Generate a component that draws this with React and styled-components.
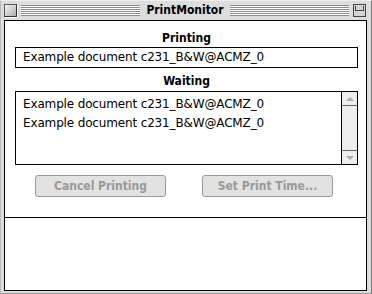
import React from 'react'
import styled, { createGlobalStyle } from 'styled-components'

const Global = createGlobalStyle`
  html, body { margin: 0; padding: 0; background: #fff; }
  * { box-sizing: border-box; }
`

function App() {
    const waiting = [
        'Example document c231_B&W@ACMZ_0',
        'Example document c231_B&W@ACMZ_0',
    ]
    return (
        <>
            <Global />
            <Window>
                <TitleBar>
                    <CloseBox />
                    <Stripes />
                    <Title>PrintMonitor</Title>
                    <Stripes />
                    <ZoomBox>
                        <span />
                    </ZoomBox>
                </TitleBar>
                <Content>
                    <Main>
                        <Label>Printing</Label>
                        <Field>Example document c231_B&amp;W@ACMZ_0</Field>
                        <Label $top={5}>Waiting</Label>
                        <List>
                            <Items>
                                {waiting.map((w, i) => (
                                    <Item key={i}>{w}</Item>
                                ))}
                            </Items>
                            <ScrollBar>
                                <Arrow $up />
                                <Track />
                                <Arrow />
                            </ScrollBar>
                        </List>
                        <Buttons>
                            <Button disabled>Cancel Printing</Button>
                            <Button disabled>Set Print Time...</Button>
                        </Buttons>
                    </Main>
                    <Footer />
                </Content>
            </Window>
        </>
    )
}

const Window = styled.div`
    width: 372px;
    height: 294px;
    background: #dddddd;
    border-top: 1px solid #eeeeee;
    border-left: 1px solid #bbbbbb;
    border-right: 1px solid #777777;
    border-bottom: 1px solid #999999;
    padding: 0 4px 2px 3px;
    display: flex;
    flex-direction: column;
`

const TitleBar = styled.div`
    height: 19px;
    display: flex;
    align-items: center;
    gap: 4px;
    padding: 0 1px 0 0;
`

const CloseBox = styled.div`
    width: 13px;
    height: 13px;
    border: 1px solid #555;
    border-right-color: #333;
    border-bottom-color: #333;
    background: linear-gradient(135deg, #f4f4f4 0%, #cfcfcf 55%, #aaaaaa 100%);
    box-shadow: 1px 1px 0 #ffffff;
`

const Stripes = styled.div`
    flex: 1;
    height: 11px;
    background: repeating-linear-gradient(
        to bottom,
        #8c8c8c 0px,
        #8c8c8c 1px,
        #ffffff 1px,
        #ffffff 2px
    );
`

const Title = styled.div`
    font-family: 'DejaVu Sans Condensed', 'DejaVu Sans', sans-serif;
    font-weight: bold;
    font-size: 12px;
    color: #000;
    padding: 0 2px;
    line-height: 19px;
`

const ZoomBox = styled.div`
    width: 13px;
    height: 13px;
    border: 1px solid #444;
    background: #d4d4d4;
    display: flex;
    align-items: flex-start;
    justify-content: center;
    span {
        display: block;
        width: 9px;
        height: 5px;
        margin-top: 1px;
        border: 1px solid #444;
        border-top: none;
    }
`

const Content = styled.div`
    flex: 1;
    background: #ffffff;
    border: 1px solid #000;
    display: flex;
    flex-direction: column;
`

const Main = styled.div`
    padding: 9px 8px 0 10px;
    border-bottom: 1px solid #000;
    display: flex;
    flex-direction: column;
`

const Label = styled.div`
    font-family: 'DejaVu Sans Condensed', 'DejaVu Sans', sans-serif;
    font-weight: bold;
    font-size: 12px;
    text-align: center;
    line-height: 16px;
    margin-top: ${(p) => p.$top || 0}px;
    margin-bottom: 1px;
    color: #000;
`

const Text = `
    font-family: 'DejaVu Sans', sans-serif;
    font-size: 12px;
    letter-spacing: -0.15px;
    color: #000;
`

const Field = styled.div`
    ${Text}
    height: 21px;
    border: 1px solid #000;
    padding: 0 7px;
    line-height: 19px;
`

const List = styled.div`
    height: 74px;
    border: 1px solid #000;
    display: flex;
    margin-top: 1px;
`

const Items = styled.div`
    flex: 1;
    padding: 3px 7px;
`

const Item = styled.div`
    ${Text}
    line-height: 19px;
`

const ScrollBar = styled.div`
    width: 16px;
    border-left: 1px solid #000;
    background: #eeeeee;
    display: flex;
    flex-direction: column;
`

const Arrow = styled.div`
    height: 14px;
    position: relative;
    border-bottom: ${(p) => (p.$up ? '1px solid #666' : 'none')};
    border-top: ${(p) => (p.$up ? 'none' : '1px solid #666')};
    &::after {
        content: '';
        position: absolute;
        left: 4px;
        top: 5px;
        border-left: 4px solid transparent;
        border-right: 4px solid transparent;
        ${(p) =>
            p.$up
                ? 'border-bottom: 4px solid #aaaaaa;'
                : 'border-top: 4px solid #aaaaaa;'}
    }
`

const Track = styled.div`
    flex: 1;
`

const Buttons = styled.div`
    display: flex;
    justify-content: space-between;
    padding: 10px 25px 20px 20px;
`

const Button = styled.button`
    width: 131px;
    height: 22px;
    border: 1px solid #9a9a9a;
    border-radius: 3px;
    background: #e2e2e2;
    font-family: 'DejaVu Sans Condensed', 'DejaVu Sans', sans-serif;
    font-weight: bold;
    font-size: 12px;
    color: #999999;
    padding: 0;
`

const Footer = styled.div`
    flex: 1;
`

export default App
